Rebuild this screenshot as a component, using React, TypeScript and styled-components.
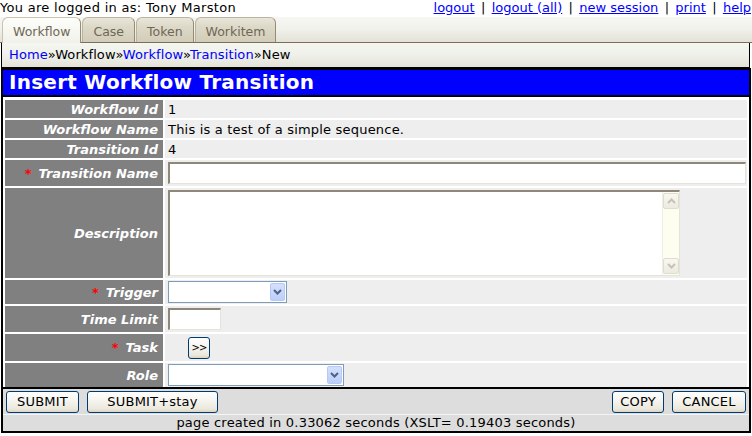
import React from 'react'
import styled, { createGlobalStyle } from 'styled-components'

const GlobalStyle = createGlobalStyle`
  html, body {
    margin: 0;
    padding: 0;
    background: #fff;
  }
  body {
    font-family: "DejaVu Sans", Verdana, sans-serif;
    font-size: 13px;
    letter-spacing: 0.2px;
    color: #000;
  }
`

const Page = styled.div`
  width: 752px;
  height: 436px;
  overflow: hidden;
`

const TopBar = styled.div`
  display: flex;
  justify-content: space-between;
  height: 17px;
  line-height: 15px;
  padding-right: 1px;
`

const Who = styled.span`
  letter-spacing: 0.3px;
`

const Links = styled.div`
  display: flex;
  letter-spacing: 0;
`

const Link = styled.a`
  color: #0000ff;
  text-decoration: underline;
  cursor: pointer;
`

const Sep = styled.span`
  display: inline-block;
  width: 17px;
  text-align: center;
`

const TabBar = styled.div`
  display: flex;
  align-items: flex-end;
  gap: 1px;
  height: 25px;
  padding-left: 2px;
  background: linear-gradient(#f6f7f2, #f1f2ec 45%, #e4e2d7);
  border-bottom: 1px solid #7c6f58;
`

const Tab = styled.div<{ $active?: boolean }>`
  height: ${(p) => (p.$active ? '26px' : '25px')};
  margin-bottom: ${(p) => (p.$active ? '-1px' : '0')};
  box-sizing: border-box;
  padding: 2px 10px 0;
  line-height: 23px;
  font-size: 12.5px;
  letter-spacing: 0;
  color: #6f6756;
  border: 1px solid ${(p) => (p.$active ? '#c9c3b0' : '#bab39d')};
  border-bottom: none;
  border-right-color: #958c76;
  border-radius: 6px 6px 0 0;
  background: ${(p) =>
    p.$active
      ? 'linear-gradient(#fdfdfa, #f6f6f1 60%, #f1f1ea)'
      : 'linear-gradient(#e9e6da, #dcd8c7 40%, #d2cdb9)'};
`

const Crumbs = styled.div`
  height: 24px;
  line-height: 23px;
  margin: 0 2px 0 1px;
  padding-left: 7px;
  border: 1px solid #000;
  border-top: none;
  letter-spacing: 0.1px;
  background: linear-gradient(#f5f6f1, #eef0e9 50%, #e4e3d9);
`

const CrumbLink = styled.a`
  color: #0000ff;
  text-decoration: none;
`

const FormBox = styled.div`
  margin: 0 1px;
  border: 2px solid #000;
`

const Title = styled.h1`
  margin: 0;
  height: 25px;
  line-height: 25px;
  padding-left: 6px;
  background: #0000ff;
  color: #fff;
  font-size: 20px;
  font-weight: bold;
  letter-spacing: 0.25px;
  border-bottom: 2px solid #000;
`

const Rows = styled.div`
  display: flex;
  flex-direction: column;
  gap: 2px;
  padding: 3px 2px 0;
`

const Row = styled.div<{ $h: number }>`
  display: grid;
  grid-template-columns: 158px 1fr;
  gap: 2px;
  height: ${(p) => p.$h}px;
`

const Label = styled.div`
  display: flex;
  align-items: center;
  justify-content: flex-end;
  padding-right: 5px;
  background: #808080;
  color: #fff;
  font-weight: bold;
  font-style: italic;
  letter-spacing: 0;
`

const Star = styled.span`
  color: #ff0000;
  font-style: normal;
  margin-right: 7px;
`

const Value = styled.div`
  display: flex;
  align-items: center;
  padding-left: 3px;
  background: #eeeeee;
`

const TextInput = styled.input<{ $w: number }>`
  box-sizing: border-box;
  width: ${(p) => p.$w}px;
  height: 22px;
  margin: 0;
  padding: 0 3px;
  border-style: solid;
  border-width: 2px 1px 1px 2px;
  border-color: #8f8878 #e6e4d6 #e6e4d6 #8f8878;
  background: #fff;
  font: inherit;
  outline: none;
`

const AreaWrap = styled.div`
  display: flex;
  box-sizing: border-box;
  width: 512px;
  height: 86px;
  border-style: solid;
  border-width: 2px 1px 1px 2px;
  border-color: #8f8878 #e6e4d6 #e6e4d6 #8f8878;
  background: #fff;
`

const Area = styled.textarea`
  flex: 1;
  border: none;
  resize: none;
  outline: none;
  margin: 0;
  font: inherit;
`

const ScrollTrack = styled.div`
  display: flex;
  flex-direction: column;
  justify-content: space-between;
  width: 16px;
  padding: 1px 0;
  background: #fdfdf0;
  border-left: 1px solid #f0efe4;
`

const ScrollBtn = styled.div`
  display: flex;
  align-items: center;
  justify-content: center;
  height: 16px;
  box-sizing: border-box;
  border: 1px solid #e0ddcf;
  border-radius: 2px;
  background: linear-gradient(#f8f7f1, #ecebe2);
  color: #c6c3b4;
`

const SelectBox = styled.div<{ $w: number }>`
  display: flex;
  align-items: center;
  box-sizing: border-box;
  width: ${(p) => p.$w}px;
  height: 22px;
  padding: 1px;
  border: 1px solid #7f9db9;
  background: #fff;
`

const NativeSelect = styled.select`
  flex: 1;
  appearance: none;
  border: none;
  outline: none;
  background: transparent;
  font: inherit;
  height: 100%;
`

const DropBtn = styled.div`
  display: flex;
  align-items: center;
  justify-content: center;
  width: 15px;
  height: 18px;
  box-sizing: border-box;
  border: 1px solid #b6c8f4;
  border-radius: 2px;
  background: linear-gradient(#d4e0fd, #bccff9);
  color: #4d6185;
  pointer-events: none;
`

const XpButton = styled.button<{ $w: number }>`
  box-sizing: border-box;
  width: ${(p) => p.$w}px;
  height: 22px;
  margin: 0;
  padding: 0;
  border: 1px solid #003c74;
  border-radius: 3px;
  background: linear-gradient(#ffffff, #f5f4ef 45%, #ebe8dc 85%, #d9d3c3);
  font-family: "DejaVu Sans", Verdana, sans-serif;
  font-size: ${(p) => (p.$w < 30 ? '10px' : '13px')};
  letter-spacing: ${(p) => (p.$w < 30 ? '-1px' : '0.2px')};
  color: #000;
  cursor: pointer;
`

const TaskValue = styled(Value)`
  padding-left: 23px;
`

const Actions = styled.div`
  display: flex;
  align-items: center;
  gap: 8px;
  height: 25px;
  padding: 0 3px;
  border-top: 2px solid #000;
  border-bottom: 1px solid #f4f4f4;
  background: #dddddd;
`

const Spacer = styled.div`
  flex: 1;
`

const Footer = styled.div`
  height: 16px;
  line-height: 15px;
  text-align: center;
  background: #dddddd;
`

const Chevron = ({ up }: { up?: boolean }) => (
  <svg width="9" height="6" viewBox="0 0 9 6">
    <path
      d={up ? 'M1 5 L4.5 1.5 L8 5' : 'M1 1 L4.5 4.5 L8 1'}
      fill="none"
      stroke="currentColor"
      strokeWidth="2"
    />
  </svg>
)

const Select = ({ w }: { w: number }) => (
  <SelectBox $w={w}>
    <NativeSelect>
      <option></option>
    </NativeSelect>
    <DropBtn>
      <Chevron />
    </DropBtn>
  </SelectBox>
)

const Req = () => <Star>*</Star>

export default function App() {
  return (
    <Page>
      <GlobalStyle />
      <TopBar>
        <Who>You are logged in as: Tony Marston</Who>
        <Links>
          <Link>logout</Link>
          <Sep>|</Sep>
          <Link>logout (all)</Link>
          <Sep>|</Sep>
          <Link>new session</Link>
          <Sep>|</Sep>
          <Link>print</Link>
          <Sep>|</Sep>
          <Link>help</Link>
        </Links>
      </TopBar>
      <TabBar>
        <Tab $active>Workflow</Tab>
        <Tab>Case</Tab>
        <Tab>Token</Tab>
        <Tab>Workitem</Tab>
      </TabBar>
      <Crumbs>
        <CrumbLink>Home</CrumbLink>»Workflow»<CrumbLink>Workflow</CrumbLink>»
        <CrumbLink>Transition</CrumbLink>»New
      </Crumbs>
      <FormBox>
        <Title>Insert Workflow Transition</Title>
        <Rows>
          <Row $h={18}>
            <Label>Workflow Id</Label>
            <Value>1</Value>
          </Row>
          <Row $h={18}>
            <Label>Workflow Name</Label>
            <Value>This is a test of a simple sequence.</Value>
          </Row>
          <Row $h={18}>
            <Label>Transition Id</Label>
            <Value>4</Value>
          </Row>
          <Row $h={26}>
            <Label>
              <Req />
              Transition Name
            </Label>
            <Value>
              <TextInput $w={578} />
            </Value>
          </Row>
          <Row $h={90}>
            <Label>Description</Label>
            <Value>
              <AreaWrap>
                <Area />
                <ScrollTrack>
                  <ScrollBtn>
                    <Chevron up />
                  </ScrollBtn>
                  <ScrollBtn>
                    <Chevron />
                  </ScrollBtn>
                </ScrollTrack>
              </AreaWrap>
            </Value>
          </Row>
          <Row $h={24}>
            <Label>
              <Req />
              Trigger
            </Label>
            <Value>
              <Select w={119} />
            </Value>
          </Row>
          <Row $h={26}>
            <Label>Time Limit</Label>
            <Value>
              <TextInput $w={53} />
            </Value>
          </Row>
          <Row $h={27}>
            <Label>
              <Req />
              Task
            </Label>
            <TaskValue>
              <XpButton $w={22}>&gt;&gt;</XpButton>
            </TaskValue>
          </Row>
          <Row $h={24}>
            <Label>Role</Label>
            <Value>
              <Select w={176} />
            </Value>
          </Row>
        </Rows>
        <Actions>
          <XpButton $w={73}>SUBMIT</XpButton>
          <XpButton $w={131}>SUBMIT+stay</XpButton>
          <Spacer />
          <XpButton $w={52}>COPY</XpButton>
          <XpButton $w={74}>CANCEL</XpButton>
        </Actions>
        <Footer>page created in 0.33062 seconds (XSLT= 0.19403 seconds)</Footer>
      </FormBox>
    </Page>
  )
}
